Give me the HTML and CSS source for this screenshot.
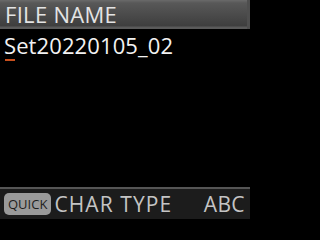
FILE: index.html
```html
<!DOCTYPE html>
<html>
<head>
<meta charset="utf-8">
<link rel="stylesheet" href="styles.css">
</head>
<body>
<div class="screen">
  <div class="header">FILE NAME</div>
  <div class="content">
    <div class="name">Set20220105_02</div>
    <div class="cursor"></div>
  </div>
  <div class="footer">
    <span class="quick">QUICK</span>
    <span class="label chartype">CHAR TYPE</span>
    <span class="label abc">ABC</span>
  </div>
</div>
</body>
</html>
```
FILE: styles.css
```css
html, body {
  margin: 0;
  padding: 0;
  background: #000;
}
.screen {
  width: 250px;
  height: 219px;
  display: flex;
  flex-direction: column;
  background: #000;
  font-family: "Open Sans", "Noto Sans", sans-serif;
  overflow: hidden;
}
.header {
  height: 29px;
  flex: none;
  background: linear-gradient(#6a6a6a 0, #585858 3px, #3e3e3e 26px, #5a5a5a 27px, #5a5a5a 29px);
  color: #e4e4e4;
  font-size: 22px;
  line-height: 29px;
  padding-left: 5px;
  letter-spacing: 0.3px;
  border-right: 3px solid #4e4e4e;
}
.content {
  flex: 1;
  padding-left: 4px;
  padding-top: 2px;
}
.name {
  color: #f2f2f2;
  font-size: 22px;
  line-height: 28px;
  letter-spacing: 0.1px;
}
.cursor {
  width: 10px;
  height: 2px;
  background: #c8501e;
  margin-left: 1px;
}
.footer {
  height: 30px;
  flex: none;
  border-top: 2px solid #555;
  background: #1c1c1c;
  display: flex;
  align-items: center;
  padding-left: 4px;
  color: #c4c4c4;
}
.quick {
  background: #9a9a9a;
  color: #1e1e1e;
  border-radius: 5px;
  font-size: 13px;
  line-height: 22px;
  height: 22px;
  padding: 0 4px;
}
.label {
  font-size: 21px;
  line-height: 26px;
}
.chartype {
  margin-left: 3px;
  letter-spacing: 1.1px;
}
.abc {
  margin-left: auto;
  margin-right: 5px;
  letter-spacing: 0.4px;
}
```
